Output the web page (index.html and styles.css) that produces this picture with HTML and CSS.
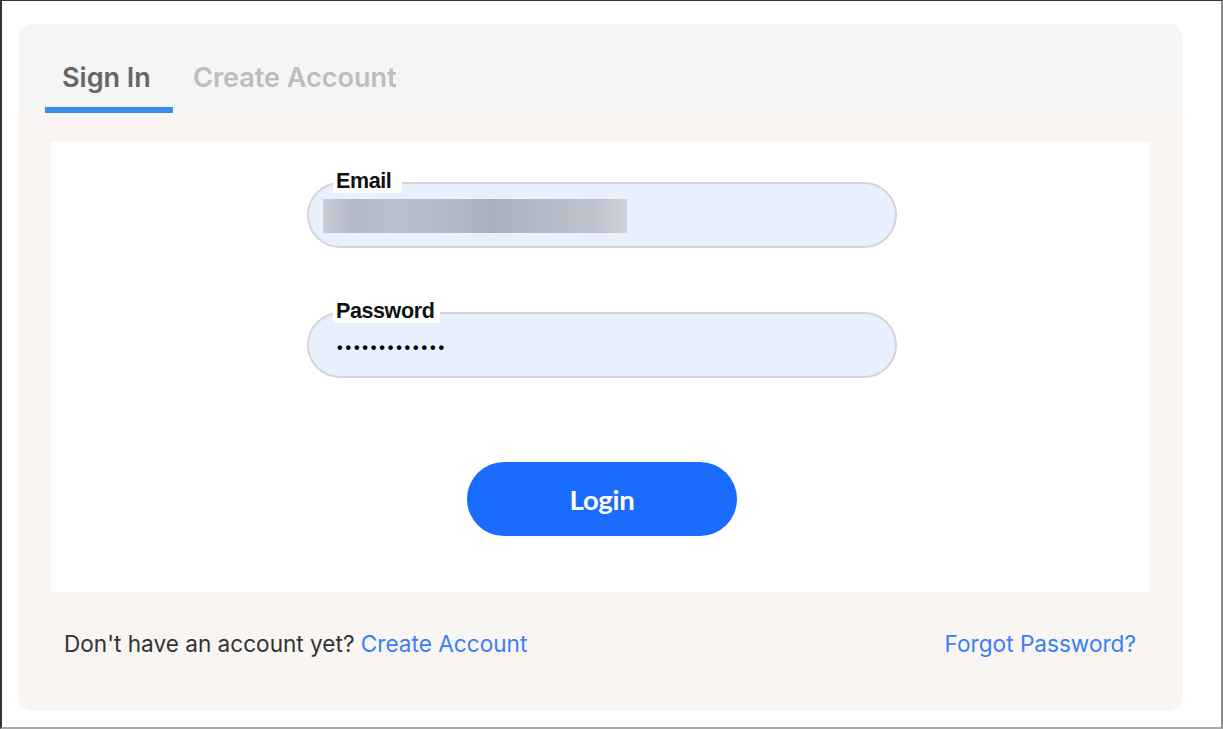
FILE: index.html
```html
<!DOCTYPE html>
<html lang="en">
<head>
<meta charset="utf-8">
<title>Sign In</title>
<link rel="stylesheet" href="styles.css">
</head>
<body>
<div class="frame">
  <div class="card">
    <div class="tabs">
      <div class="tab active">Sign In</div>
      <div class="tab">Create Account</div>
    </div>
    <div class="panel">
      <div class="field">
        <span class="label label-email">Email</span>
        <div class="input"><span class="blurred"></span></div>
      </div>
      <div class="field field-second">
        <span class="label">Password</span>
        <div class="input"><span class="dots">•••••••••••••</span></div>
      </div>
      <button class="login" type="button">Login</button>
    </div>
    <div class="footer">
      <p class="signup">Don't have an account yet? <a href="#" class="link">Create Account</a></p>
      <a href="#" class="link">Forgot Password?</a>
    </div>
  </div>
</div>
</body>
</html>
```

FILE: styles.css
```css
html, body {
  margin: 0;
  padding: 0;
  background: #ffffff;
}

.frame {
  box-sizing: border-box;
  width: 1223px;
  height: 729px;
  border-top: 1px solid #333333;
  border-left: 2px solid #333333;
  border-right: 2px solid #8a8a8a;
  border-bottom: 2px solid #a8a8a8;
  padding: 23px 0 0 16px;
}

.card {
  width: 1165px;
  height: 687px;
  box-sizing: border-box;
  background: #f8f5f3;
  border-radius: 16px;
  display: flex;
  flex-direction: column;
  font-family: Inter, "Liberation Sans", sans-serif;
}

.tabs {
  height: 89px;
  box-sizing: border-box;
  background: #f5f5f5;
  border-top-left-radius: 16px;
  margin-right: 6px;
  padding-left: 27px;
  display: flex;
  align-items: flex-end;
}

.tab {
  box-sizing: border-box;
  padding: 39px 17px 14px;
  line-height: 30px;
  font-size: 27px;
  font-weight: 600;
  letter-spacing: 0;
  color: #bdbdbd;
  border-bottom: 6px solid transparent;
  white-space: nowrap;
}

.tab.active {
  width: 128px;
  color: #666666;
  border-bottom-color: #3b8de8;
  margin-right: 3px;
}

.panel {
  margin: 29px 33px 0;
  height: 450px;
  background: #ffffff;
  display: flex;
  flex-direction: column;
  align-items: center;
  padding-top: 40px;
  box-sizing: border-box;
}

.field {
  position: relative;
  width: 590px;
  margin-left: 3px;
}

.field-second {
  margin-top: 64px;
}

.label {
  position: absolute;
  left: 26px;
  top: -12px;
  height: 23px;
  line-height: 23px;
  padding: 0 6px 0 3px;
  background: #ffffff;
  font-family: "Liberation Sans", Arial, sans-serif;
  font-weight: 700;
  font-size: 21.5px;
  letter-spacing: -0.4px;
  color: #111111;
}

.label-email {
  padding-right: 11px;
}

.input {
  box-sizing: border-box;
  height: 66px;
  border: 2px solid #d4d4d6;
  border-radius: 33px;
  background: #e8f0fe;
  display: flex;
  align-items: center;
}

.blurred {
  display: block;
  margin-left: 14px;
  margin-top: 1px;
  width: 304px;
  height: 34px;
  background: linear-gradient(90deg, #c9ced8 0%, #b2b8c4 10%, #b9bfcb 22%, #b3b9c5 40%, #aab0bc 55%, #b5bbc6 75%, #bdc2cc 88%, #cdd2da 100%);
}

.dots {
  margin-left: 28px;
  margin-top: 5px;
  font-family: "Liberation Sans", Arial, sans-serif;
  font-size: 16px;
  font-weight: 700;
  letter-spacing: 2.85px;
  color: #000000;
  line-height: 20px;
}

.login {
  margin-top: 84px;
  margin-left: 3px;
  width: 270px;
  height: 74px;
  border: none;
  border-radius: 37px;
  background: #1a6cff;
  color: #ffffff;
  font-family: Lato, "Liberation Sans", sans-serif;
  font-weight: 700;
  font-size: 27.5px;
  letter-spacing: -0.3px;
  padding: 0;
  cursor: pointer;
}

.footer {
  display: flex;
  justify-content: space-between;
  align-items: center;
  padding: 37px 47px 0 46px;
  height: 30px;
  font-size: 22.6px;
  line-height: 30px;
  color: #333333;
}

.signup {
  margin: 0;
}

.link {
  color: #3b7ff2;
  text-decoration: none;
}
```
